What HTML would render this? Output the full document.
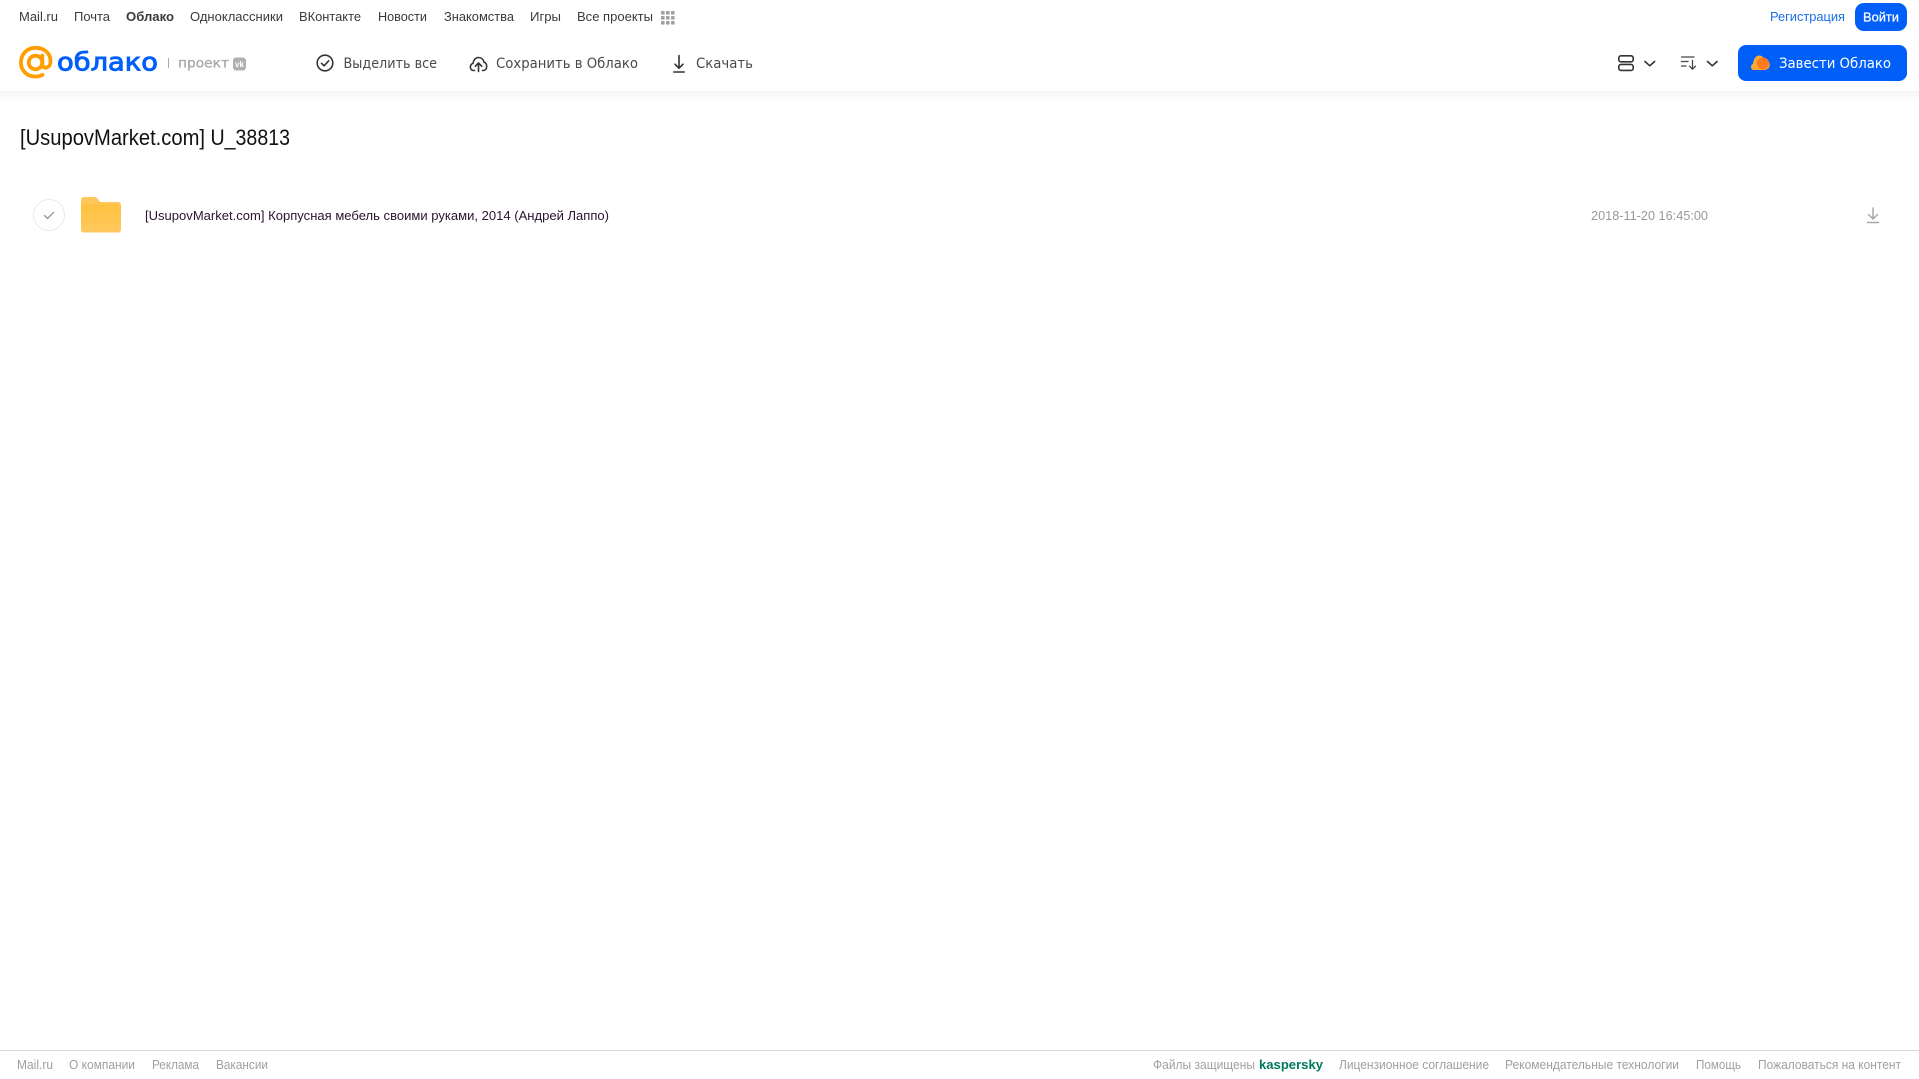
<!DOCTYPE html>
<html lang="ru"><head><meta charset="utf-8"><title>Облако</title>
<style>
html,body{margin:0;padding:0;background:#fff;width:1919px;height:1079px;overflow:hidden}
svg{display:block}
text{font-family:"Liberation Sans",Arial,sans-serif}
.n{font-size:13px;fill:#3a3a3a}
.t{font-size:14px;fill:#4a4a4a;font-family:"DejaVu Sans",sans-serif}
.f{font-size:12.5px;fill:#a0a0a0}
</style></head><body>
<svg xmlns="http://www.w3.org/2000/svg" width="1919" height="1079" viewBox="0 0 1919 1079">
<defs>
<linearGradient id="sh" x1="0" y1="0" x2="0" y2="1"><stop offset="0" stop-color="#f4f4f4"/><stop offset="1" stop-color="#fff"/></linearGradient>
<linearGradient id="fd" x1="0" y1="0" x2="0" y2="1"><stop offset="0" stop-color="#ffc13f"/><stop offset="1" stop-color="#ffc95f"/></linearGradient>
</defs>
<rect width="1919" height="1079" fill="#fff"/>
<rect y="91" width="1919" height="10" fill="url(#sh)"/>

<!-- top nav -->
<text class="n" x="19" y="21" textLength="39" lengthAdjust="spacingAndGlyphs">Mail.ru</text>
<text class="n" x="74" y="21" textLength="36" lengthAdjust="spacingAndGlyphs">Почта</text>
<text class="n" x="126" y="21" textLength="48" lengthAdjust="spacingAndGlyphs" font-weight="700">Облако</text>
<text class="n" x="190" y="21" textLength="93" lengthAdjust="spacingAndGlyphs">Одноклассники</text>
<text class="n" x="299" y="21" textLength="62" lengthAdjust="spacingAndGlyphs">ВКонтакте</text>
<text class="n" x="378" y="21" textLength="49" lengthAdjust="spacingAndGlyphs">Новости</text>
<text class="n" x="444" y="21" textLength="70" lengthAdjust="spacingAndGlyphs">Знакомства</text>
<text class="n" x="530" y="21" textLength="31" lengthAdjust="spacingAndGlyphs">Игры</text>
<text class="n" x="577" y="21" textLength="76" lengthAdjust="spacingAndGlyphs">Все проекты</text>
<g fill="#a0a0a0">
<rect x="661" y="11" width="3.6" height="3.6" rx=".8"/><rect x="666" y="11" width="3.6" height="3.6" rx=".8"/><rect x="671" y="11" width="3.6" height="3.6" rx=".8"/>
<rect x="661" y="16" width="3.6" height="3.6" rx=".8"/><rect x="666" y="16" width="3.6" height="3.6" rx=".8"/><rect x="671" y="16" width="3.6" height="3.6" rx=".8"/>
<rect x="661" y="21" width="3.6" height="3.6" rx=".8"/><rect x="666" y="21" width="3.6" height="3.6" rx=".8"/><rect x="671" y="21" width="3.6" height="3.6" rx=".8"/>
</g>
<text class="n" style="fill:#1a6fe8" x="1770" y="21" textLength="75" lengthAdjust="spacingAndGlyphs">Регистрация</text>
<rect x="1855" y="3" width="52" height="28" rx="9" fill="#005ff9"/>
<text class="n" style="fill:#fff;stroke:#fff;stroke-width:.25" x="1863" y="21.500" textLength="36" lengthAdjust="spacingAndGlyphs">Войти</text>

<!-- logo -->
<g fill="none" stroke="#ff9e00" stroke-width="3.8" stroke-linecap="round">
<circle cx="35.500" cy="62.500" r="6.800"/>
<path d="M42.300 55.500v9c0 4.600 7.900 4.600 8.200-2.700C50.800 53 44 47.800 35.500 47.800 27 47.800 20.900 54.200 20.900 62.500c0 8.300 6.400 14 14.300 14 2.800 0 5-.5 7.200-1.600"/>
</g>
<text x="57" y="70.500" font-size="25" fill="#005ff9" stroke="#005ff9" stroke-width=".9" style="font-family:'DejaVu Sans',sans-serif" textLength="101" lengthAdjust="spacingAndGlyphs">облако</text>
<rect x="168" y="58" width="1" height="10" fill="#aaa"/>
<text x="178" y="67.500" font-size="13" fill="#a8a8a8" stroke="#a8a8a8" stroke-width=".3" style="font-family:'DejaVu Sans',sans-serif" textLength="51" lengthAdjust="spacingAndGlyphs">проект</text>
<rect x="233" y="57.500" width="13" height="13" rx="3.200" fill="#b0b0b0"/>
<text x="235" y="67" font-size="8" font-weight="700" fill="#fff" textLength="9" lengthAdjust="spacingAndGlyphs">vk</text>

<!-- toolbar -->
<g fill="none" stroke="#333" stroke-width="1.600" stroke-linecap="round" stroke-linejoin="round">
<circle cx="325" cy="63" r="7.800"/>
<path d="M321.500 63.300l2.600 2.500 4.600-5"/>
<path d="M474.500 70.500h-.8c-2.300 0-3.300-1.700-3.300-3.400 0-1.800 1-3.200 2.600-3.700.4-3.400 2.600-5.900 5.500-5.900 2.800 0 4.900 2 5.500 4.700 1.700.4 2.700 2.200 2.700 4.100 0 2.400-1.300 4.200-3.500 4.200h-.7"/>
<path d="M478.500 71.500v-8.500M475.300 66.200l3.200-3.200 3.200 3.200"/>
<path d="M679 55.500v12.500M675 64.200l4 4 4-4"/>
<path d="M673.800 72h10.400"/>
</g>
<text class="t" x="343.500" y="68" textLength="93.500" lengthAdjust="spacingAndGlyphs">Выделить все</text>
<text class="t" x="496" y="68" textLength="142" lengthAdjust="spacingAndGlyphs">Сохранить в Облако</text>
<text class="t" x="696" y="68" textLength="57" lengthAdjust="spacingAndGlyphs">Скачать</text>

<!-- view / sort -->
<g fill="none" stroke="#333" stroke-width="1.600" stroke-linecap="round" stroke-linejoin="round">
<rect x="1618.800" y="55.800" width="14.400" height="6" rx="2.200"/>
<rect x="1618.800" y="64.400" width="14.400" height="6" rx="2.200"/>
<path d="M1645 61.500l4.800 4.300 4.800-4.300"/>
<path d="M1707.500 61.500l4.800 4.300 4.800-4.300"/>
</g>
<g fill="none" stroke="#444" stroke-width="1.300" stroke-linecap="round" stroke-linejoin="round">
<path d="M1681.500 57h12.500M1681.500 61.500h6.500M1681.500 66h4.500"/>
<path d="M1692.500 60.500v8.500M1689.500 66.200l3 3 3-3"/>
</g>

<!-- CTA -->
<rect x="1738" y="45" width="169" height="36" rx="8" fill="#005ff9"/>
<path d="M1754 70c-2 0-3-1.500-3-3 0-1.700 1-2.700 2-3.200.3-3.600 2.400-8.300 6-8.300 2.600 0 4.400 1.500 5 3.500 3 .5 5.800 2.600 5.800 5.700 0 3.300-2.600 5.300-5.800 5.300z" fill="#ffa930"/>
<circle cx="1763" cy="63.500" r="6" fill="#ff7a1f"/>
<text x="1779" y="68" font-size="14" fill="#fff" style="font-family:'DejaVu Sans',sans-serif" textLength="112" lengthAdjust="spacingAndGlyphs">Завести Облако</text>

<!-- title -->
<text x="20" y="145" font-size="22" fill="#111" textLength="185" lengthAdjust="spacingAndGlyphs">[UsupovMarket.com]</text>
<text x="210.500" y="145" font-size="22" fill="#111" textLength="79.500" lengthAdjust="spacingAndGlyphs">U_38813</text>

<!-- row -->
<circle cx="49" cy="215" r="15.500" fill="#fff" stroke="#eaeaea" stroke-width="1"/>
<path d="M44.500 215.500l3 3 6-6" fill="none" stroke="#999" stroke-width="1.400" stroke-linecap="round" stroke-linejoin="round"/>
<path d="M81 200c0-1.700 1.300-3 3-3h10c1.800 0 2.800.7 3.800 2l2.200 3h18c1.700 0 3 1.300 3 3v24.500c0 1.700-1.300 3-3 3H84c-1.700 0-3-1.300-3-3z" fill="#ffc75a"/>
<path d="M81 207.500c0-1.700 1.300-3 3-3h34c1.700 0 3 1.300 3 3v22c0 1.700-1.300 3-3 3H84c-1.700 0-3-1.300-3-3z" fill="url(#fd)"/>
<text x="145" y="220" font-size="13" fill="#2a1430" textLength="464" lengthAdjust="spacingAndGlyphs">[UsupovMarket.com] Корпусная мебель своими руками, 2014 (Андрей Лаппо)</text>
<text x="1591" y="220" font-size="13" fill="#999" textLength="117" lengthAdjust="spacingAndGlyphs">2018-11-20 16:45:00</text>
<g fill="none" stroke="#a8a8a8" stroke-width="1.500" stroke-linecap="round" stroke-linejoin="round">
<path d="M1873 208v11M1868.500 214.500l4.500 4.500 4.500-4.500"/>
<path d="M1867.500 222.500h11"/>
</g>

<!-- footer -->
<rect y="1050" width="1919" height="1" fill="#d9d9d9"/>
<text class="f" x="17" y="1069" textLength="36" lengthAdjust="spacingAndGlyphs">Mail.ru</text>
<text class="f" x="69" y="1069" textLength="66" lengthAdjust="spacingAndGlyphs">О компании</text>
<text class="f" x="152" y="1069" textLength="47" lengthAdjust="spacingAndGlyphs">Реклама</text>
<text class="f" x="216" y="1069" textLength="52" lengthAdjust="spacingAndGlyphs">Вакансии</text>
<text class="f" x="1153" y="1069" textLength="102" lengthAdjust="spacingAndGlyphs">Файлы защищены</text>
<text x="1259" y="1069" font-size="13" font-weight="700" fill="#00795f" textLength="64" lengthAdjust="spacingAndGlyphs">kaspersky</text>
<text class="f" x="1339" y="1069" textLength="150" lengthAdjust="spacingAndGlyphs">Лицензионное соглашение</text>
<text class="f" x="1505" y="1069" textLength="174" lengthAdjust="spacingAndGlyphs">Рекомендательные технологии</text>
<text class="f" x="1696" y="1069" textLength="45" lengthAdjust="spacingAndGlyphs">Помощь</text>
<text class="f" x="1758" y="1069" textLength="143" lengthAdjust="spacingAndGlyphs">Пожаловаться на контент</text>
</svg>
</body></html>
